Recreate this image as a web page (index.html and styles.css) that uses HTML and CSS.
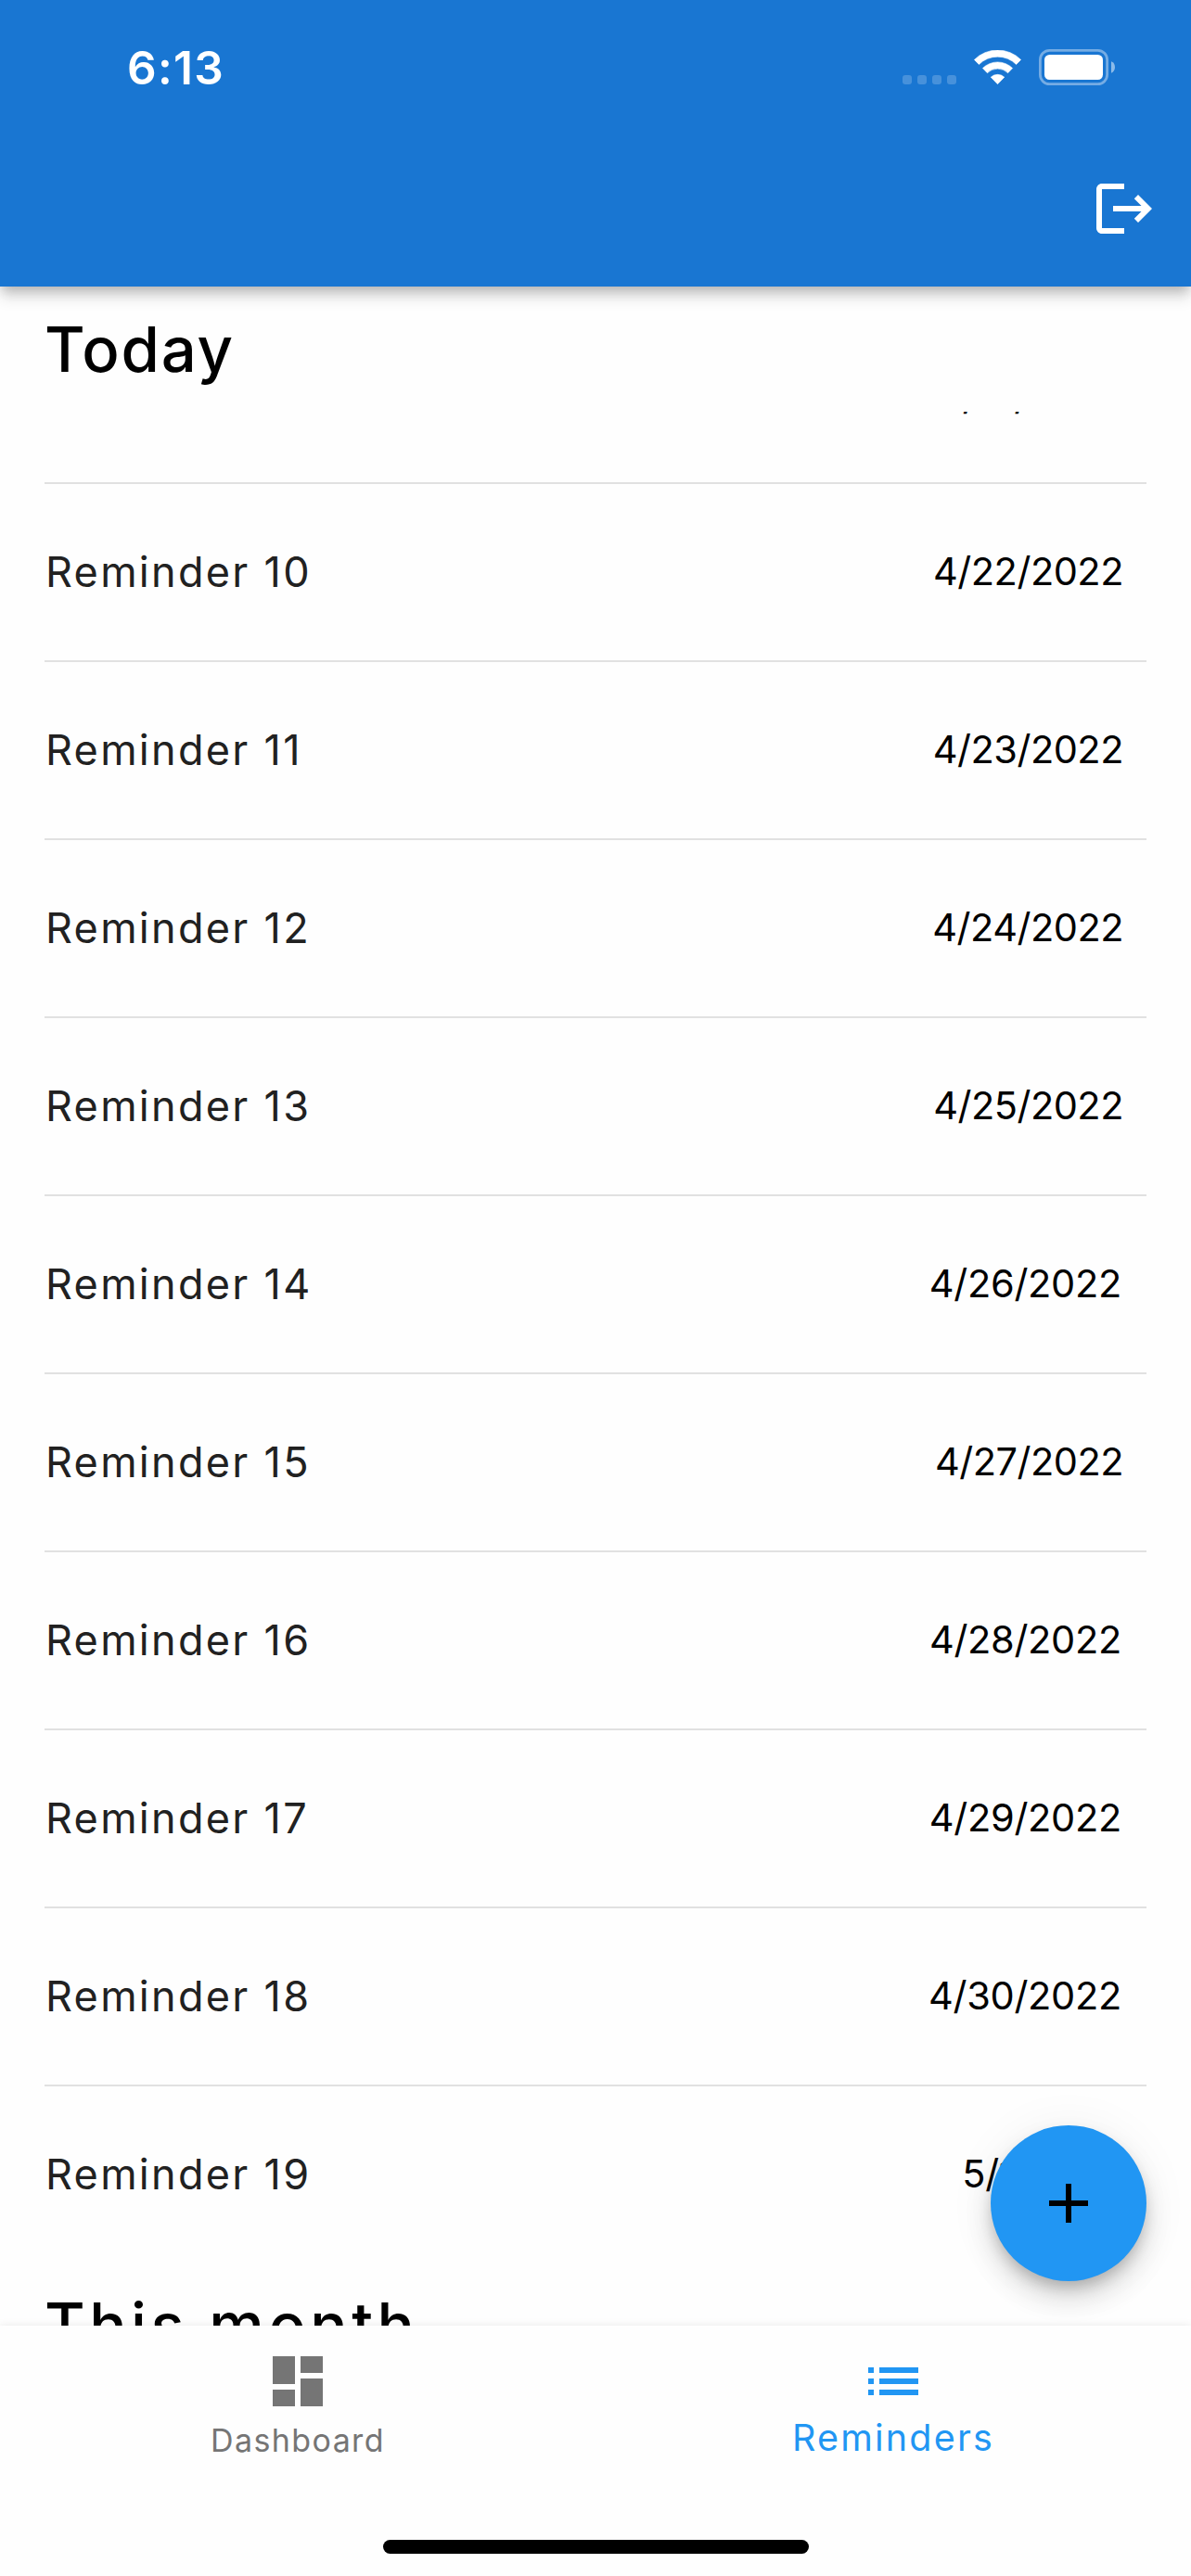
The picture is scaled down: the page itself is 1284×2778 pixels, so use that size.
FILE: index.html
```html
<!DOCTYPE html>
<html lang="en">
<head>
<meta charset="utf-8">
<title>Reminders</title>
<link rel="stylesheet" href="styles.css">
</head>
<body>
<div class="screen">
  <header class="app-bar">
    <div class="status">
      <span class="clock">6:13</span>
      <div class="indicators">
        <div class="cell"><i></i><i></i><i></i><i></i></div>
        <svg class="wifi" width="51" height="38" viewBox="1050 54 51 38" fill="#fff">
          <path d="M1050.4 64.4a35.5 35.5 0 0 1 50.2 0l-5 5.1a28.4 28.4 0 0 0-40.2 0z" stroke="#fff" stroke-width=".6" stroke-linejoin="round"/>
          <path d="M1059.4 73.6a22.8 22.8 0 0 1 32.2 0l-5 5.1a15.7 15.7 0 0 0-22.2 0z" stroke="#fff" stroke-width=".6" stroke-linejoin="round"/>
          <path d="M1068.2 83.2a10.8 10.8 0 0 1 14.6 0l-7.3 7.5z" stroke="#fff" stroke-width=".6" stroke-linejoin="round"/>
        </svg>
        <svg width="82" height="39" viewBox="0 0 82 39">
          <rect x="1.4" y="1.4" width="72.2" height="36.2" rx="10" fill="none" stroke="#fff" stroke-opacity=".4" stroke-width="2.8"/>
          <rect x="6" y="6" width="63" height="27" rx="5.5" fill="#fff"/>
          <path d="M78 13.3c2.6.9 4 3.3 4 6.200s-1.400 5.300-4 6.200z" fill="#fff" fill-opacity=".5"/>
        </svg>
      </div>
    </div>
    <div class="toolbar">
      <svg width="72" height="72" viewBox="0 0 24 24" fill="#fff"><path d="M17 7l-1.410 1.410L18.170 11H8v2h10.170l-2.580 2.580L17 17l5-5zM4 5h8V3H4c-1.100 0-2 .9-2 2v14c0 1.100.9 2 2 2h8v-2H4z"/></svg>
    </div>
  </header>

  <main class="content">
    <h2 class="section">Today</h2>
    <div class="clip">
      <ul class="list scrolled">
        <li><span>Reminder 9</span><time class="first">4/21/2022</time></li>
        <li><span>Reminder 10</span><time>4/22/2022</time></li>
        <li><span>Reminder 11</span><time>4/23/2022</time></li>
        <li><span>Reminder 12</span><time>4/24/2022</time></li>
        <li><span>Reminder 13</span><time>4/25/2022</time></li>
        <li><span>Reminder 14</span><time class="wide">4/26/2022</time></li>
        <li><span>Reminder 15</span><time>4/27/2022</time></li>
        <li><span>Reminder 16</span><time class="wide">4/28/2022</time></li>
        <li><span>Reminder 17</span><time class="wide">4/29/2022</time></li>
        <li><span>Reminder 18</span><time class="wide">4/30/2022</time></li>
        <li><span>Reminder 19</span><time class="wide">5/1/2022</time></li>
      </ul>
    </div>
    <h2 class="section month">This month</h2>
    <button class="fab" aria-label="Add">
      <svg width="72" height="72" viewBox="0 0 24 24"><path d="M19 13h-6v6h-2v-6H5v-2h6V5h2v6h6z"/></svg>
    </button>
  </main>

  <nav class="bottom-nav">
    <div class="tabs">
      <a class="tab">
        <svg width="72" height="72" viewBox="0 0 24 24" fill="currentColor"><path d="M3 13h8V3H3zm0 8h8v-6H3zm10 0h8V11h-8zm0-18v6h8V3z"/></svg>
        <span>Dashboard</span>
      </a>
      <a class="tab active">
        <svg width="72" height="72" viewBox="0 0 24 24" fill="currentColor"><path d="M3 13h2v-2H3zm0 4h2v-2H3zm0-8h2V7H3zm4 4h14v-2H7zm0 4h14v-2H7zM7 7v2h14V7z"/></svg>
        <span>Reminders</span>
      </a>
    </div>
    <div class="home"></div>
  </nav>
</div>
</body>
</html>
```
FILE: styles.css
```css
* { box-sizing: border-box; }

body {
  margin: 0;
  font-family: Inter, "Liberation Sans", sans-serif;
  background: #fefefe;
}

.screen {
  display: flex;
  flex-direction: column;
  width: 1284px;
  height: 2778px;
  overflow: hidden;
}

.app-bar {
  position: relative;
  z-index: 2;
  flex: none;
  height: 309px;
  background: #1976d2;
  box-shadow: 0 6px 12px -3px rgba(0, 0, 0, .2), 0 12px 15px rgba(0, 0, 0, .12), 0 3px 20px rgba(0, 0, 0, .04);
}

.status {
  display: flex;
  align-items: center;
  justify-content: space-between;
  height: 141px;
  padding: 4px 82px 0 137px;
  color: #fff;
}

.clock {
  font-size: 49.5px;
  font-weight: 600;
  letter-spacing: 1.3px;
}

.indicators {
  display: flex;
  align-items: center;
  gap: 19px;
}

.cell {
  display: flex;
  gap: 6px;
  align-self: flex-end;
  padding-bottom: 1px;
}

.cell i {
  width: 10px;
  height: 10px;
  border-radius: 3px;
  background: rgba(255, 255, 255, .2);
}

.toolbar {
  display: flex;
  align-items: center;
  justify-content: flex-end;
  height: 168px;
  padding-right: 36px;
}

.content {
  position: relative;
  flex: 1;
  min-height: 0;
  overflow: hidden;
}

.section {
  height: 135px;
  margin: 0;
  padding-left: 48px;
  font-size: 67px;
  font-weight: 500;
  line-height: 135px;
  letter-spacing: 1.8px;
  color: #000;
}

.month { letter-spacing: 4.5px; }

.clip {
  height: 1996px;
  overflow: hidden;
}

.list {
  display: flex;
  flex-direction: column;
  margin: 0;
  padding: 0 48px;
  list-style: none;
}

.scrolled { margin-top: -114px; }

.list li {
  display: flex;
  align-items: center;
  justify-content: space-between;
  height: 192px;
  padding-left: 1px;
  border-bottom: 2px solid #e1e1e1;
  font-size: 45px;
  letter-spacing: 2.3px;
  color: #212121;
}

.list li:last-child {
  height: 190px;
  border-bottom: 0;
}

.list span { padding-bottom: 2px; }

.list time {
  padding: 0 25px 2px 0;
  font-size: 41.5px;
  letter-spacing: -.5px;
  color: #000;
}

.list .wide {
  padding-right: 27px;
  letter-spacing: -.3px;
}

.list .first {
  margin-bottom: -3px;
  padding: 0 28px 0 0;
}

/* Floats above the list in the lower right corner */
.fab {
  position: absolute;
  right: 48px;
  bottom: 48px;
  display: flex;
  align-items: center;
  justify-content: center;
  width: 168px;
  height: 168px;
  padding: 0;
  border: 0;
  border-radius: 50%;
  background: #2196f3;
  box-shadow: 0 9px 15px -3px rgba(0, 0, 0, .2), 0 18px 30px rgba(0, 0, 0, .14), 0 3px 54px rgba(0, 0, 0, .06);
}

.bottom-nav {
  position: relative;
  flex: none;
  display: flex;
  flex-direction: column;
  justify-content: space-between;
  align-items: center;
  height: 270px;
  padding-bottom: 24px;
  background: #fefefe;
  box-shadow: 0 0 9px rgba(0, 0, 0, .09);
}

.tabs {
  display: flex;
  width: 100%;
}

.tab {
  flex: 1;
  display: flex;
  flex-direction: column;
  align-items: center;
  padding-top: 24px;
  color: #757575;
  font-size: 34px;
  line-height: 54px;
  letter-spacing: 1.4px;
}

.tab span { padding-top: 1px; }

.active {
  color: #2196f3;
  font-size: 39.5px;
  line-height: 49px;
  letter-spacing: 2.2px;
}

.home {
  width: 459px;
  height: 15px;
  border-radius: 8px;
  background: #000;
}
```
